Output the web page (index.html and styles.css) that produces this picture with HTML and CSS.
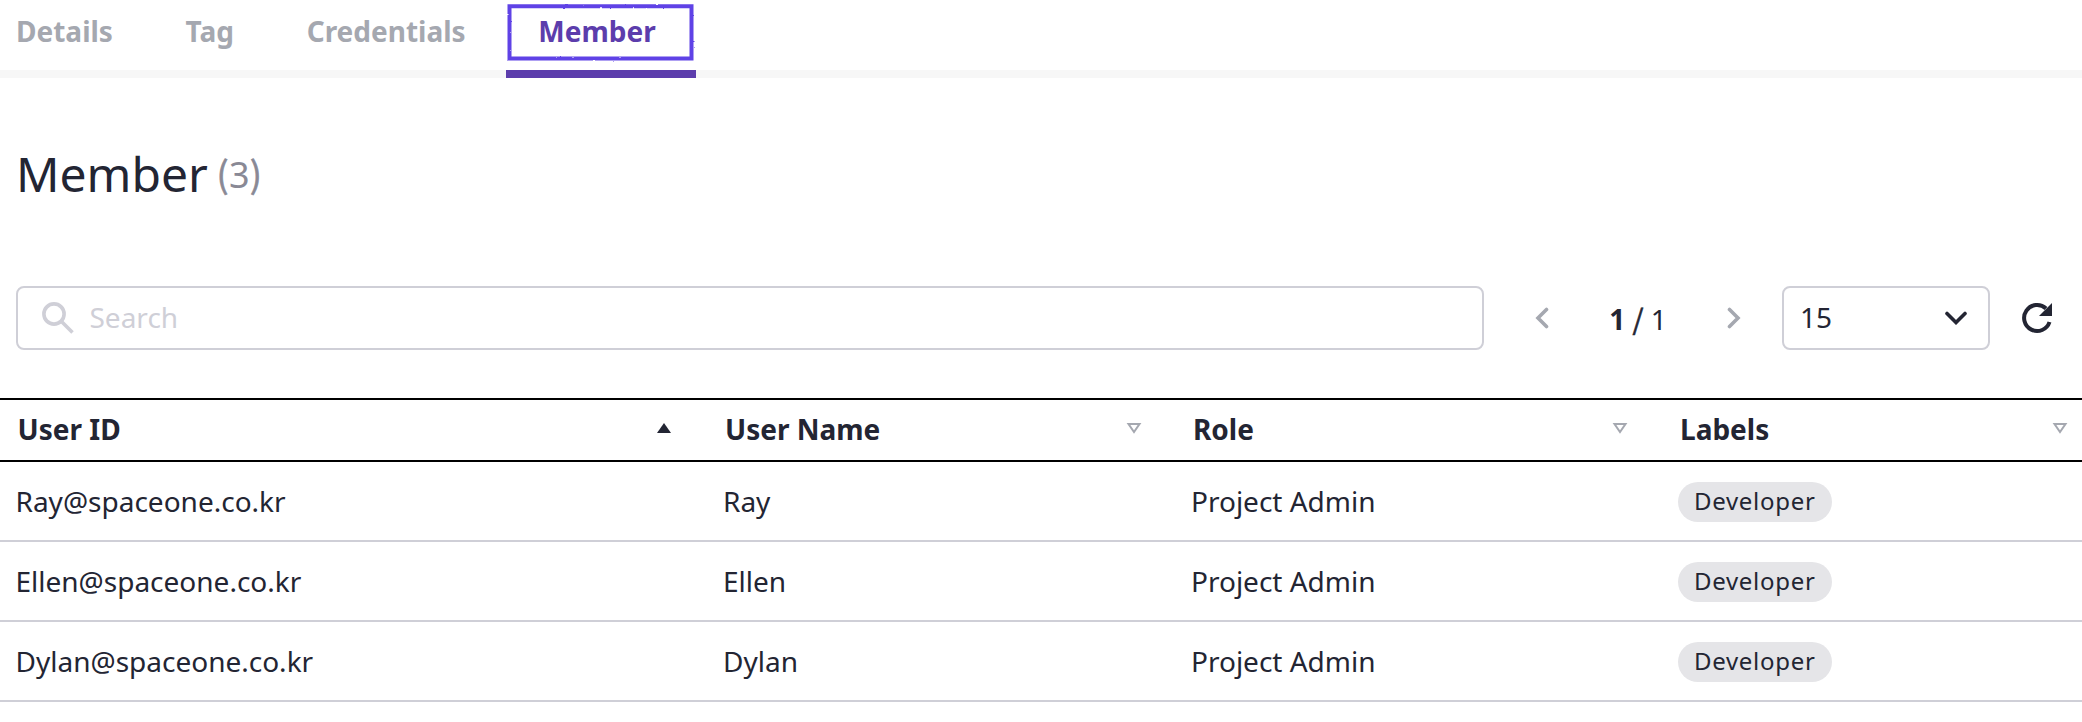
FILE: index.html
```html
<!DOCTYPE html>
<html lang="en">
<head>
<meta charset="utf-8">
<title>Member</title>
<link rel="stylesheet" href="styles.css">
</head>
<body>
<nav class="tabs">
  <a class="tab tab-first">Details</a>
  <a class="tab">Tag</a>
  <a class="tab">Credentials</a>
  <a class="tab active">Member
    <svg class="marker" width="190" height="64" viewBox="0 0 190 64">
      <defs><filter id="rough" x="-5%" y="-10%" width="110%" height="120%"><feTurbulence type="fractalNoise" baseFrequency="0.3" numOctaves="1" seed="4"/><feDisplacementMap in="SourceGraphic" scale="2.2" xChannelSelector="R" yChannelSelector="G"/><feGaussianBlur stdDeviation="0.5"/></filter></defs>
      <path d="M3.500 6.300H185.500V58.500H3.500Z" filter="url(#rough)"/>
    </svg>
  </a>
</nav>
<header class="heading"><h1>Member</h1><span class="count"><span class="mark">(</span>3<span class="mark">)</span></span></header>
<section class="toolbar">
  <div class="search">
    <svg class="search-icon" width="32" height="32" viewBox="0 0 32 32"><circle cx="12" cy="12" r="10.100"/><path d="M20 20l10.500 10.500"/></svg>
    <span>Search</span>
  </div>
  <div class="pager">
    <svg class="arrow" width="14" height="22" viewBox="0 0 14 22"><path d="M11.500 2.500L3 11l8.500 8.500"/></svg>
    <span class="page"><b>1</b> <span class="mark">/</span> 1</span>
    <svg class="arrow" width="14" height="22" viewBox="0 0 14 22"><path d="M2.500 2.500L11 11l-8.500 8.500"/></svg>
  </div>
  <div class="select"><span>15</span>
    <svg class="caret" width="22" height="14" viewBox="0 0 22 14"><path d="M2 2.500l9 9 9-9"/></svg>
  </div>
  <svg class="refresh" width="32" height="32" viewBox="0 0 32 32"><path class="arc" d="M25 6.500A13 13 0 1 0 28.500 20"/><path class="head" d="M31 1v13H18z"/></svg>
</section>
<main class="table">
  <div class="row head-row">
    <div class="cell"><span>User ID</span><svg class="sort" width="16" height="12" viewBox="0 0 16 12"><path class="on" d="M8 1L15 11H1z"/></svg></div>
    <div class="cell name-col"><span>User Name</span><svg class="sort" width="16" height="12" viewBox="0 0 16 12"><path class="off" d="M2.500 2h11L8 10z"/></svg></div>
    <div class="cell"><span>Role</span><svg class="sort" width="16" height="12" viewBox="0 0 16 12"><path class="off" d="M2.500 2h11L8 10z"/></svg></div>
    <div class="cell last"><span>Labels</span><svg class="sort" width="16" height="12" viewBox="0 0 16 12"><path class="off" d="M2.500 2h11L8 10z"/></svg></div>
  </div>
  <div class="row"><div class="cell">Ray@spaceone.co.kr</div><div class="cell">Ray</div><div class="cell">Project Admin</div><div class="cell"><span class="badge">Developer</span></div></div>
  <div class="row"><div class="cell">Ellen@spaceone.co.kr</div><div class="cell">Ellen</div><div class="cell">Project Admin</div><div class="cell"><span class="badge">Developer</span></div></div>
  <div class="row"><div class="cell">Dylan@spaceone.co.kr</div><div class="cell">Dylan</div><div class="cell">Project Admin</div><div class="cell"><span class="badge">Developer</span></div></div>
</main>
</body>
</html>
```
FILE: styles.css
```css
* { box-sizing: border-box; }
body { margin: 0; background: #fff; color: #232533; font: 28px/40px "Noto Sans", sans-serif; overflow: hidden; }
svg { display: block; flex: none; fill: none; }
/* Brackets and slashes use the taller CJK forms */
.mark { font-family: "Noto Sans CJK KR", sans-serif; line-height: 1; -webkit-text-stroke: .6px currentColor; }
.tabs { display: flex; height: 78px; border-bottom: 8px solid #f7f7f7; }
.tab { position: relative; height: 78px; padding: 11px 40.7px 0 32px; color: #a5a8b0; font-weight: 700; border-bottom: 8px solid transparent; }
.tab-first { padding-left: 16px; }
.active { width: 190px; padding-right: 0; color: #5c3dac; border-color: #5c3dac; }
.marker { position: absolute; left: 0; top: 0; stroke: #5f43e6; stroke-width: 4; }
.heading { display: flex; align-items: baseline; height: 208px; padding: 63px 0 0 16px; line-height: 66px; }
h1 { margin: 0; font-size: 48px; font-weight: 400; }
.count { position: relative; top: -4px; margin-left: 8.5px; font-size: 36px; letter-spacing: .3px; color: #898995; }
.toolbar { display: flex; align-items: center; height: 64px; padding-left: 16px; }
.search { display: flex; align-items: center; width: 1468px; height: 64px; padding-left: 24px; border: 2px solid #cfcfd7; border-radius: 8px; color: #cfcfd7; }
.search span { margin: 0 0 2px 15.5px; }
.search-icon { stroke: #cfcfd7; stroke-width: 3.6; }
.pager { display: flex; align-items: center; justify-content: space-between; width: 206px; margin-left: 51px; }
.arrow { stroke: #a5a8b0; stroke-width: 3.6; stroke-linecap: round; }
.page { position: relative; top: 1px; }
.select { display: flex; align-items: center; justify-content: space-between; width: 208px; height: 64px; margin-left: 41px; padding: 0 21px 0 16px; border: 2px solid #cfcfd7; border-radius: 8px; }
.select span { margin-bottom: 2px; }
.caret { stroke: #232533; stroke-width: 3.6; stroke-linecap: round; }
.refresh { margin-left: 31px; }
.arc { stroke: #232533; stroke-width: 4; }
.head, .on { fill: #232533; }
.off { stroke: #a5a8b0; stroke-width: 2; }
.table { margin-top: 48px; }
.row { display: grid; grid-template-columns: 708px 468px 487px 1fr; align-items: center; height: 80px; border-bottom: 2px solid #cfcfd7; }
.cell { display: flex; align-items: center; padding-left: 15px; }
.cell:first-child { padding-left: 15.5px; }
.head-row { height: 64px; border-top: 2px solid #000; border-bottom-color: #000; font-weight: 700; }
.head-row .cell { justify-content: space-between; padding: 0 35px 0 17px; }
.head-row .cell:first-child { padding: 0 36px 0 17.5px; }
.head-row .name-col { padding-right: 34px; }
.head-row .last { padding-right: 14px; }
.head-row span { margin-bottom: 2px; }
.sort { position: relative; top: -2px; }
.badge { display: block; height: 40px; margin-top: 2px; padding: 0 16px; border-radius: 20px; background: #e5e5e8; font-size: 24px; line-height: 38px; letter-spacing: .7px; }
```
